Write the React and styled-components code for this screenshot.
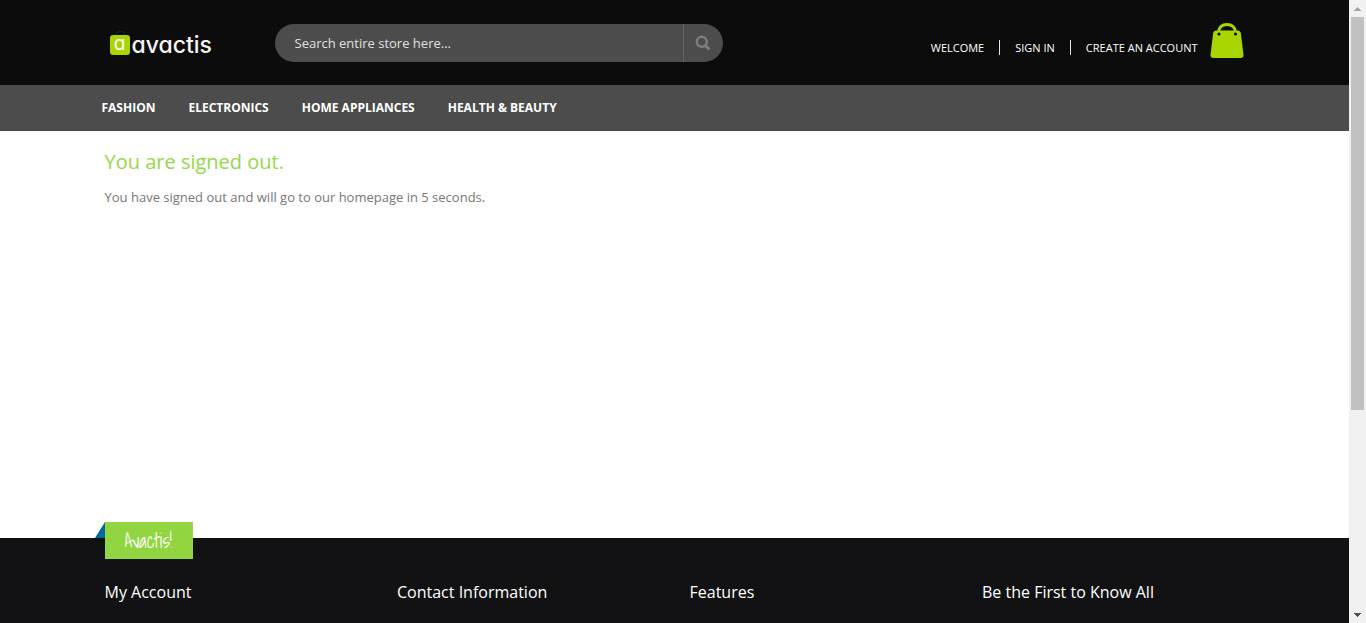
import React from "react";
import styled, { createGlobalStyle } from "styled-components";

const GlobalStyle = createGlobalStyle`
  *, *::before, *::after { box-sizing: border-box; }
  body {
    margin: 0;
    background: #fff;
    color: #767676;
    font: 13px/20px "Open Sans", sans-serif;
  }
  h1, h2, p, ul { margin: 0; padding: 0; }
  ul { list-style: none; }
  a { color: inherit; text-decoration: none; }
`;

const Shell = styled.div`
  display: flex;
  height: 100vh;
`;

const Page = styled.div`
  flex: 1;
  min-width: 0;
  display: flex;
  flex-direction: column;
  overflow: hidden;
`;

const Container = styled.div`
  width: 100%;
  max-width: 1170px;
  margin: 0 auto;
  padding: 0 15px;
`;

const Header = styled.header`
  background: #0c0c0c;
`;

const HeaderRow = styled(Container)`
  display: flex;
  align-items: center;
  height: 85px;
  padding: 0 16px 0 20px;
`;

const Logo = styled.a`
  display: flex;
  align-items: center;
  gap: 2px;
  width: 165px;
  padding-top: 4px;
  color: #f4f4f4;
  font: 500 23px/24px Inter, sans-serif;
  font-feature-settings: "cv11";
`;

const LogoMark = styled.span`
  position: relative;
  width: 20px;
  height: 20px;
  border-radius: 3px;
  background: #a8d400;
  color: #fff;
  font-size: 19px;
  font-weight: 400;
  line-height: 18px;
  text-align: center;
  &::before {
    content: "";
    position: absolute;
    top: -4px;
    left: 6px;
    width: 9px;
    height: 4px;
    border: 1px solid #14213a;
    border-bottom: 0;
    border-radius: 5px 5px 0 0;
  }
`;

const SearchForm = styled.form`
  display: flex;
  width: 448px;
  height: 38px;
  border-radius: 19px;
  background: #4b4c4b;
  overflow: hidden;
`;

const SearchInput = styled.input`
  flex: 1;
  min-width: 0;
  padding: 0 20px;
  border: 0;
  outline: 0;
  background: transparent;
  color: #e0e0e0;
  font: inherit;
  &::placeholder { color: #e0e0e0; opacity: 1; }
`;

const SearchButton = styled.button`
  display: flex;
  align-items: center;
  justify-content: center;
  width: 40px;
  padding: 0;
  border: 0;
  border-left: 1px solid #626362;
  background: transparent;
  color: #7d7e7d;
`;

const AccountLinks = styled.ul`
  display: flex;
  margin-left: auto;
  padding-top: 10px;
  color: #fff;
  font-size: 11px;
  line-height: 15px;
`;

const AccountItem = styled.li`
  padding: 0 15px;
  & + & { border-left: 1px solid #e6e6e6; }
  &:last-child { padding-right: 12px; }
`;

const CartLink = styled.a`
  display: flex;
  padding-bottom: 4px;
`;

const NavBar = styled.nav`
  background: #4b4c4b;
`;

const NavList = styled(Container).attrs({ as: "ul" })`
  && { margin: 0 auto; padding: 0 12px; }
  display: flex;
  gap: 33px;
  color: #fff;
  font-size: 12px;
  font-weight: 700;
  line-height: 46px;
`;

const Main = styled.main`
  flex: 1;
`;

const Title = styled.h1`
  padding-top: 18px;
  color: #94d74a;
  font-size: 20px;
  font-weight: 400;
  line-height: 26px;
`;

const Message = styled.p`
  padding-top: 12px;
`;

const Footer = styled.footer`
  background: #121214;
`;

const FooterBody = styled(Container)`
  position: relative;
  padding-top: 42px;
`;

const Ribbon = styled.div`
  position: absolute;
  top: -16px;
  left: 15px;
  width: 88px;
  height: 37px;
  background: #91d641;
  color: #fff;
  font: 20px/38px "Shadows Into Light", Lato, sans-serif;
  text-align: center;
  &::before {
    content: "";
    position: absolute;
    top: 0;
    right: 100%;
    border-left: 10px solid transparent;
    border-bottom: 16px solid #0067a0;
  }
`;

const FooterColumns = styled.div`
  display: grid;
  grid-template-columns: repeat(4, 1fr);
  column-gap: 30px;
  padding-bottom: 19px;
`;

const FooterTitle = styled.h2`
  color: #fff;
  font-size: 16px;
  font-weight: 400;
  line-height: 24px;
  white-space: nowrap;
`;

const ScrollTrack = styled.div`
  display: flex;
  flex-direction: column;
  width: 17px;
  background: #f1f1f1;
`;

const ScrollArrow = styled.div`
  display: flex;
  align-items: center;
  justify-content: center;
  height: 17px;
  color: ${(p) => (p.$active ? "#505050" : "#a3a3a3")};
`;

const ScrollLane = styled.div`
  flex: 1;
  padding: 0 2px;
`;

const ScrollThumb = styled.div`
  height: 66.8%;
  background: #c1c1c1;
`;

const departments = ["Fashion", "Electronics", "Home Appliances", "Health & Beauty"];
const accountLinks = ["Welcome", "Sign in", "Create an account"];
const footerTitles = ["My Account", "Contact Information", "Features", "Be the First to Know All"];

function SearchIcon() {
  return (
    <svg width="16" height="16" viewBox="0 0 16 16" fill="none" stroke="currentColor" aria-hidden="true">
      <circle cx="6.8" cy="6.8" r="5" strokeWidth="2.4" />
      <path d="M10.4 10.4 14.5 14.5" strokeWidth="2.8" />
    </svg>
  );
}

function BagIcon() {
  return (
    <svg width="34" height="36" viewBox="0 0 34 36" aria-hidden="true">
      <path d="M8.5 9C9 4.5 12 1.5 17 1.5S25 4.5 25.5 9" fill="none" stroke="#a8d400" strokeWidth="2.8" />
      <path d="M6.5 7.5h21q3 0 3.4 3L33.5 32q.2 3-3 3h-27q-3.2 0-3-3L3.1 10.5q.4-3 3.4-3Z" fill="#a8d400" />
      <circle cx="9" cy="11" r="1.6" fill="#0c0c0c" />
      <circle cx="25.5" cy="11" r="1.6" fill="#0c0c0c" />
    </svg>
  );
}

function Arrow({ down }) {
  return (
    <svg width="7" height="4" viewBox="0 0 7 4" shapeRendering="crispEdges" aria-hidden="true">
      <path d={down ? "M0 0h7v1H6v1H5v1H4v1H3V3H2V2H1V1H0Z" : "M3 0h1v1h1v1h1v1h1v1H0V3h1V2h1V1h1Z"} fill="currentColor" />
    </svg>
  );
}

export default function App() {
  return (
    <>
      <GlobalStyle />
      <Shell>
        <Page>
          <Header>
            <HeaderRow>
              <Logo href="#">
                <LogoMark aria-hidden="true">a</LogoMark>
                <span>avactis</span>
              </Logo>
              <SearchForm role="search" onSubmit={(e) => e.preventDefault()}>
                <SearchInput type="text" aria-label="Search entire store" placeholder="Search entire store here..." />
                <SearchButton type="submit" aria-label="Search">
                  <SearchIcon />
                </SearchButton>
              </SearchForm>
              <AccountLinks>
                {accountLinks.map((label) => (
                  <AccountItem key={label}>
                    <a href="#">{label.toUpperCase()}</a>
                  </AccountItem>
                ))}
              </AccountLinks>
              <CartLink href="#" aria-label="Shopping cart">
                <BagIcon />
              </CartLink>
            </HeaderRow>
          </Header>
          <NavBar>
            <NavList>
              {departments.map((label) => (
                <li key={label}>
                  <a href="#">{label.toUpperCase()}</a>
                </li>
              ))}
            </NavList>
          </NavBar>
          <Main>
            <Container>
              <Title>You are signed out.</Title>
              <Message>You have signed out and will go to our homepage in 5 seconds.</Message>
            </Container>
          </Main>
          <Footer>
            <FooterBody>
              <Ribbon>Avactis!</Ribbon>
              <FooterColumns>
                {footerTitles.map((title) => (
                  <FooterTitle key={title}>{title}</FooterTitle>
                ))}
              </FooterColumns>
            </FooterBody>
          </Footer>
        </Page>
        <ScrollTrack aria-hidden="true">
          <ScrollArrow><Arrow /></ScrollArrow>
          <ScrollLane><ScrollThumb /></ScrollLane>
          <ScrollArrow $active><Arrow down /></ScrollArrow>
        </ScrollTrack>
      </Shell>
    </>
  );
}
